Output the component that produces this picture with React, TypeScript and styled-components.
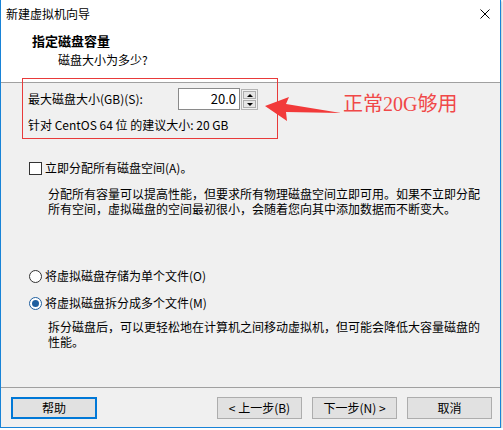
import React from "react";
import styled, { createGlobalStyle } from "styled-components";

const GlobalStyle = createGlobalStyle`
  html, body { margin: 0; padding: 0; background: #ffffff; }
  body {
    font-family: "Noto Sans CJK SC", "Microsoft YaHei", sans-serif;
    font-size: 12px;
    color: #000;
  }
  * { box-sizing: border-box; }
`;

const Window = styled.div`
  position: relative;
  width: 501px;
  height: 428px;
  border: 1px solid #1883d7;
  border-top: none;
  background: #f0f0f0;
  display: flex;
  flex-direction: column;
  box-shadow: 1px 1px 2px rgba(0, 0, 0, 0.25);
`;

const TitleBar = styled.div`
  height: 27px;
  background: #fff;
  display: flex;
  align-items: center;
  justify-content: space-between;
  padding: 0 10px 0 5px;
  line-height: 16px;
`;

const CloseIcon = styled.svg`
  width: 10px;
  height: 10px;
  display: block;
`;

const Header = styled.div`
  height: 56px;
  background: #fff;
  border-bottom: 1px solid #a0a0a0;
  padding: 6px 0 0 31px;
  display: flex;
  flex-direction: column;
  gap: 3px;
`;

const HeaderTitle = styled.div`
  font-weight: bold;
  font-size: 13px;
  line-height: 16px;
`;

const HeaderSub = styled.div`
  padding-left: 26px;
  line-height: 16px;
`;

const Content = styled.div`
  flex: 1;
  padding: 5px 0 0 27px;
  display: flex;
  flex-direction: column;
`;

const SizeRow = styled.div`
  display: flex;
  align-items: center;
  height: 22px;
`;

const SizeLabel = styled.span`
  width: 150px;
  line-height: 16px;
`;

const Spinner = styled.div`
  display: flex;
  align-items: stretch;
  height: 22px;
`;

const SpinInput = styled.div`
  width: 62px;
  height: 22px;
  border: 1px solid #8a8a8a;
  background: #fff;
  text-align: right;
  padding-right: 3px;
  font-size: 13px;
  line-height: 20px;
`;

const SpinFrame = styled.div`
  width: 17px;
  margin: 1px 0 0 1px;
  height: 21px;
  border: 1px solid #b4b4b4;
  padding: 1px;
  display: flex;
  flex-direction: column;
  gap: 1px;
`;

const SpinButton = styled.div`
  flex: 1;
  border: 1px solid #adadad;
  background: #e5e5e5;
  display: flex;
  align-items: center;
  justify-content: center;
`;

const Triangle = styled.span<{ $up?: boolean }>`
  width: 0;
  height: 0;
  border-left: 3px solid transparent;
  border-right: 3px solid transparent;
  ${(p) => (p.$up ? "border-bottom: 3px solid #000;" : "border-top: 3px solid #000;")}
`;

const TextLine = styled.div<{ $top: number }>`
  margin-top: ${(p) => p.$top}px;
  line-height: 16px;
`;

const OptionRow = styled.div<{ $top: number }>`
  margin-top: ${(p) => p.$top}px;
  display: flex;
  align-items: center;
  height: 16px;
  line-height: 16px;
`;

const CheckBox = styled.span`
  width: 13px;
  height: 13px;
  border: 1px solid #333;
  background: #fff;
  margin: 0 3px 0 1px;
`;

const Radio = styled.span<{ $checked?: boolean }>`
  width: 13px;
  height: 13px;
  border-radius: 50%;
  border: 1px solid ${(p) => (p.$checked ? "#1f5f9f" : "#333")};
  background: #fff;
  margin: 0 3px 0 1px;
  display: flex;
  align-items: center;
  justify-content: center;
  &::after {
    content: "";
    display: ${(p) => (p.$checked ? "block" : "none")};
    width: 7px;
    height: 7px;
    border-radius: 50%;
    background: #1f5f9f;
  }
`;

const Desc = styled.div<{ $top: number }>`
  margin-top: ${(p) => p.$top}px;
  padding-left: 20px;
  line-height: 15px;
`;

const Footer = styled.div`
  height: 40px;
  border-top: 1px solid #a0a0a0;
  padding: 9px 8px 0 10px;
  display: flex;
  align-items: flex-start;
  gap: 10px;
`;

const Button = styled.div<{ $focused?: boolean }>`
  width: 85px;
  height: 22px;
  background: #e1e1e1;
  border: ${(p) => (p.$focused ? "2px solid #0078d7" : "1px solid #adadad")};
  display: flex;
  align-items: center;
  justify-content: center;
  line-height: 16px;
  font-size: 12px;
  ${(p) => (p.$focused ? "margin-right: auto; width: 86px;" : "")}
`;

const RedBox = styled.div`
  position: absolute;
  left: 21px;
  top: 78px;
  width: 256px;
  height: 61px;
  border: 1px solid #e83a3a;
  pointer-events: none;
`;

const Arrow = styled.svg`
  position: absolute;
  left: 261px;
  top: 94px;
  width: 82px;
  height: 30px;
`;

const Note = styled.div`
  position: absolute;
  left: 342px;
  top: 92px;
  font-family: "Liberation Serif", "Noto Sans CJK SC", serif;
  font-size: 20px;
  line-height: 24px;
  color: #f04848;
  white-space: nowrap;
`;

export default function App() {
  return (
    <>
      <GlobalStyle />
      <Window>
        <TitleBar>
          <span>新建虚拟机向导</span>
          <CloseIcon viewBox="0 0 10 10">
            <path d="M0.5 0.5 L9.5 9.5 M9.5 0.5 L0.5 9.5" stroke="#000" strokeWidth="1" />
          </CloseIcon>
        </TitleBar>
        <Header>
          <HeaderTitle>指定磁盘容量</HeaderTitle>
          <HeaderSub>磁盘大小为多少?</HeaderSub>
        </Header>
        <Content>
          <SizeRow>
            <SizeLabel>最大磁盘大小(GB)(S):</SizeLabel>
            <Spinner>
              <SpinInput>20.0</SpinInput>
              <SpinFrame>
                <SpinButton>
                  <Triangle $up />
                </SpinButton>
                <SpinButton>
                  <Triangle />
                </SpinButton>
              </SpinFrame>
            </Spinner>
          </SizeRow>
          <TextLine $top={7}>针对 CentOS 64 位 的建议大小: 20 GB</TextLine>
          <OptionRow $top={27}>
            <CheckBox />
            <span>立即分配所有磁盘空间(A)。</span>
          </OptionRow>
          <Desc $top={10}>
            <div>分配所有容量可以提高性能，但要求所有物理磁盘空间立即可用。如果不立即分配</div>
            <div>所有空间，虚拟磁盘的空间最初很小，会随着您向其中添加数据而不断变大。</div>
          </Desc>
          <OptionRow $top={52}>
            <Radio />
            <span>将虚拟磁盘存储为单个文件(O)</span>
          </OptionRow>
          <OptionRow $top={11}>
            <Radio $checked />
            <span>将虚拟磁盘拆分成多个文件(M)</span>
          </OptionRow>
          <Desc $top={8}>
            <div>拆分磁盘后，可以更轻松地在计算机之间移动虚拟机，但可能会降低大容量磁盘的</div>
            <div>性能。</div>
          </Desc>
        </Content>
        <Footer>
          <Button $focused>帮助</Button>
          <Button>&lt; 上一步(B)</Button>
          <Button>下一步(N) &gt;</Button>
          <Button>取消</Button>
        </Footer>
        <RedBox />
        <Arrow viewBox="0 0 82 30">
          <polygon points="3,12 27,3 24,10 79,19 24,18 25,27" fill="#f23a3a" />
        </Arrow>
        <Note>正常20G够用</Note>
      </Window>
    </>
  );
}
